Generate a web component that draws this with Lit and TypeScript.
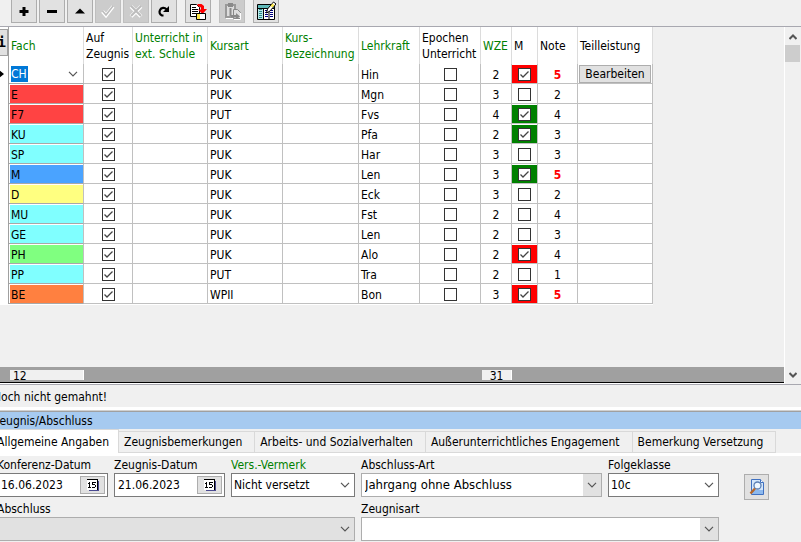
import { LitElement, html, css, svg, nothing } from "lit";
import { customElement } from "lit/decorators.js";
import { classMap } from "lit/directives/class-map.js";

type Mark = "" | "red" | "green";

interface Course {
  subject: string;
  tone: string;
  kind: string;
  teacher: string;
  hours: number;
  mark: Mark;
  grade: number;
}

const course = (
  subject: string,
  tone: string,
  kind: string,
  teacher: string,
  hours: number,
  mark: Mark,
  grade: number
): Course => ({ subject, tone, kind, teacher, hours, mark, grade });

const COURSES: Course[] = [
  course("CH", "plain", "PUK", "Hin", 2, "red", 5),
  course("E", "crimson", "PUK", "Mgn", 3, "", 2),
  course("F7", "crimson", "PUT", "Fvs", 4, "green", 4),
  course("KU", "cyan", "PUK", "Pfa", 2, "green", 3),
  course("SP", "cyan", "PUK", "Har", 3, "", 3),
  course("M", "blue", "PUK", "Len", 3, "green", 5),
  course("D", "yellow", "PUK", "Eck", 3, "", 2),
  course("MU", "cyan", "PUK", "Fst", 2, "", 4),
  course("GE", "cyan", "PUK", "Len", 2, "", 3),
  course("PH", "lime", "PUK", "Alo", 2, "red", 4),
  course("PP", "cyan", "PUT", "Tra", 2, "", 1),
  course("BE", "orange", "WPII", "Bon", 3, "red", 5),
];

const chevron = html`<svg class="chevron" width="10" height="6" viewBox="0 0 10 6">
  <path d="M1 .8 5 4.8 9 .8" fill="none" stroke="#555" stroke-width="1.2" />
</svg>`;

const glyph = (body: unknown, size = 20) =>
  html`<svg width=${size} height=${size} viewBox="0 0 ${size} ${size}">${body}</svg>`;

const ICONS = {
  plus: svg`<path d="M8.500 6h3v3h3v3h-3v3h-3v-3h-3V9h3z" fill="#000"/>`,
  minus: svg`<path d="M5 9h10v3H5z" fill="#000"/>`,
  up: svg`<path d="M10 7.500l5 5H5z" fill="#000"/>`,
  check: svg`<path d="M4.500 10.500l3.500 4 7-9" fill="none" stroke="#fff" stroke-width="3.600"/><path d="M4.500 10l3.500 4 7-9" fill="none" stroke="#bcbcbc" stroke-width="1.600"/>`,
  cross: svg`<path d="M5 5.500l10 10M15 5.500l-10 10" stroke="#fff" stroke-width="3.800"/><path d="M5 5l10 10M15 5L5 15" stroke="#bcbcbc" stroke-width="2"/>`,
  redo: svg`<path d="M9.500 14.500H8C5.500 13.500 5 11 6 9c1.200-2.600 4.500-2.800 6.500-.8" fill="none" stroke="#000" stroke-width="2.200"/><path d="M15 5v6H9z" fill="#000"/>`,
  copy: svg`<path d="M2.500 3.500h6l3 3v9h-9z" fill="#fff" stroke="#000"/><path d="M4 6.500h4M4 8.500h6M4 10.500h6M4 12.500h5" stroke="#000"/><path d="M9.500 3h4l2.500 2v3h3l-4.500 5L10 8.500h3V6.500L9.500 5z" fill="#f00"/><path d="M8.500 12.500h9v6h-9z" fill="#ffe94a" stroke="#000"/><path d="M12 13h5v5h-5z" fill="#fff"/>`,
  paste: svg`<path d="M3 3h11v14H3z" fill="#999"/><path d="M5 5h7v10H5z" fill="#ddd"/><path d="M6 2h5v4H6zM7.500 7h2v8h-2z" fill="#8a8a8a"/><path d="M11.500 8.500h4l3 3v6h-7z" fill="#ddd" stroke="#888"/><path d="M9 14h5v-2l4 3.500-4 3v-2H9z" fill="#888"/><path d="M4 17.500h7M18.500 12v6.500H12" stroke="#fff" fill="none"/>`,
  edit: svg`<path d="M1.500 3.500h17v15h-17z" fill="#fff" stroke="#000"/><path d="M2 4h16v3H2z" fill="#5fb8b8"/><path d="M2 7h5v11H2z" fill="#b8e8e8"/><path d="M3 8.500h3M3 10.500h3M3 12.500h3M3 14.500h3M3 16.500h3" stroke="#2a8a8a"/><path d="M9 9.500h3M9 11.500h3M9 13.500h3M9 15.500h3M14 9.500h3M14 11.500h3M14 13.500h3M14 15.500h3" stroke="#000080" stroke-width="1.200"/><path d="M7.500 7v11M13 7v11M2 7.500h16" stroke="#000"/><path d="M17.500 1l2.500 2-6 7-3.500 2 1-4z" fill="#fff" stroke="#000"/><path d="M16.500 2.500l2 1.500-2 2.500-2-1.500z" fill="#ffe94a"/>`,
};

const calendar = html`<svg width="12" height="12" viewBox="0 0 12 12" shape-rendering="crispEdges">
  <path d="M2 2h10v10H2z" fill="#4a4a90" />
  <path d="M0 1h10v10H0z" fill="#fff" />
  <path d="M0 0h11v1H0zM10 1h1v10h-1z" fill="#000" />
  <path d="M2 3h1v5H2zM1 4h1v1H1zM1 8h3v1H1zM5 3h4v1H5zM5 4h1v2H5zM6 5h2v1H6zM8 6h1v2H8zM5 8h3v1H5z" fill="#000" />
</svg>`;

const preview = html`<svg width="16" height="18" viewBox="0 0 16 18">
  <path d="M2.500 1.500h9l3 3v12h-12z" fill="#d3e6fb" stroke="#3f70c0" />
  <path d="M3 12h11v4H3z" fill="#8db9ee" />
  <path d="M11.500 1.500v3h3" fill="#fff" stroke="#3f70c0" />
  <circle cx="8.500" cy="7.500" r="3.500" fill="#eef7ff" stroke="#5b7fb5" stroke-width="1.300" />
  <path d="M6 10.500l-4.500 5" stroke="#b5662a" stroke-width="2.400" />
</svg>`;

const base = css`
  * {
    box-sizing: border-box;
  }
  button,
  input,
  select {
    font: inherit;
    color: inherit;
    margin: 0;
    padding: 0;
    border-radius: 0;
    outline: none;
  }
  svg {
    display: block;
    flex: none;
  }
`;

@customElement("grade-grid")
export class GradeGrid extends LitElement {
  static styles = [
    base,
    css`
      :host {
        display: flex;
        border-top: 1px solid #a8a8b0;
        border-bottom: 1px solid #a8a8b0;
      }
      .area {
        flex: 1;
        min-width: 0;
        display: flex;
        flex-direction: column;
        border-right: 1px solid #fff;
        border-bottom: 1px solid #fff;
        overflow: hidden;
      }
      table {
        table-layout: fixed;
        width: 665px;
        border-spacing: 0;
        background: #fff;
        border-bottom: 1px solid #fff;
      }
      .c-ind { width: 21px; }
      .c-75 { width: 75px; }
      .c-auf { width: 49px; }
      .c-bez { width: 76px; }
      .c-61 { width: 61px; }
      .c-wze { width: 31px; }
      .c-m { width: 26px; }
      .c-note { width: 40px; }
      th {
        height: 37px;
        padding: 0 0 0 2px;
        font-weight: normal;
        text-align: left;
        line-height: 16px;
        border-right: 1px solid #dcdcdc;
        white-space: nowrap;
      }
      td {
        height: 20px;
        padding: 2px 0 0 2px;
        line-height: 16px;
        border-right: 1px solid #c0c0c0;
        border-bottom: 1px solid #c0c0c0;
        white-space: nowrap;
      }
      .green-text { color: #008000; }
      .ind {
        border-right: 1px solid #a0a0a0;
        border-bottom: 0;
        padding: 0;
      }
      .info {
        display: block;
        width: 20px;
        height: 27px;
        margin-bottom: 7px;
        padding-right: 1px;
        text-align: right;
        font: bold 14px/16px "DejaVu Sans Mono", monospace;
        background: #e1e1e1;
        border: 1px solid #a0a0a0;
      }
      .ind svg { margin-left: auto; margin-right: 4px; }
      .center { text-align: center; padding-left: 0; }
      .subject {
        padding: 1px 0 0 1px;
        border-bottom-color: #a8a8a8;
      }
      .tone { height: 18px; padding: 2px 1px 0; }
      .crimson { background: #ff4343; }
      .cyan { background: #80ffff; }
      .blue { background: #4aa3ff; }
      .yellow { background: #ffff80; }
      .lime { background: #80ff80; }
      .orange { background: #ff8040; }
      .combo {
        display: flex;
        align-items: center;
        justify-content: space-between;
        height: 18px;
        padding: 0 5px 0 1px;
      }
      .combo input {
        width: 17px;
        height: 16px;
        border: 0;
        color: #fff;
        background: #0078d7;
      }
      .combo button { border: 0; background: none; }
      .box {
        appearance: none;
        display: block;
        width: 13px;
        height: 13px;
        margin: 0 auto;
        background: #fff;
        border: 1px solid #333;
      }
      .box:checked {
        background: #fff
          url("data:image/svg+xml,%3Csvg xmlns='http://www.w3.org/2000/svg' viewBox='0 0 11 11'%3E%3Cpath d='M1.500 5.500l2.500 2.500L9.500 2.500' fill='none' stroke='%23444' stroke-width='1.300'/%3E%3C/svg%3E");
      }
      .mark, .flush { padding-top: 1px; }
      .mark div {
        height: 18px;
        padding-top: 3px;
      }
      .red { background: #ff0000; }
      .green { background: #008000; }
      .fail { color: #ff0000; font-weight: bold; }
      .edit {
        display: block;
        width: 72px;
        height: 18px;
        margin-left: -1px;
        line-height: 16px;
        background: #e1e1e1;
        border: 1px solid #adadad;
      }
      .gap {
        flex: 1;
        min-height: 62px;
      }
      .totals {
        display: grid;
        grid-template-columns: 22px 74px 398px 30px;
        height: 16px;
        padding-top: 3px;
        background: #a0a0a0;
        border-bottom: 1px solid #000;
      }
      .sum {
        height: 10px;
        line-height: 12px;
        background: #f0f0f0;
        border-right: 1px solid #fff;
        text-align: center;
      }
      .sum.count { grid-column: 2; text-align: left; padding-left: 3px; }
      .sum.hours { grid-column: 4; }
      .scroll {
        width: 16px;
        display: flex;
        flex-direction: column;
        align-items: center;
        padding: 7px 0 6px;
      }
      .thumb {
        align-self: stretch;
        height: 17px;
        margin: 5px 1px auto 0;
        background: #cdcdcd;
      }
    `,
  ];

  private subjectCell(c: Course) {
    return c.tone === "plain"
      ? html`<div class="combo">
          <input aria-label="Fach" .value=${c.subject} />
          <button aria-label="Fach wählen">${chevron}</button>
        </div>`
      : html`<div class="tone ${c.tone}">${c.subject}</div>`;
  }

  private row = (c: Course, i: number) => html`<tr>
    <td class="ind">
      ${i === 0
        ? html`<svg width="8" height="8" viewBox="0 0 8 8"><path d="M0 2h3V0l5 4-5 4V6H0z" /></svg>`
        : nothing}
    </td>
    <td class="subject">${this.subjectCell(c)}</td>
    <td class="center"><input class="box" type="checkbox" aria-label="Auf Zeugnis ${c.subject}" checked /></td>
    <td></td>
    <td>${c.kind}</td>
    <td></td>
    <td>${c.teacher}</td>
    <td class="center"><input class="box" type="checkbox" aria-label="Epochenunterricht ${c.subject}" /></td>
    <td class="center">${c.hours}</td>
    <td class="center mark">
      <div class=${c.mark}>
        <input class="box" type="checkbox" aria-label="M ${c.subject}" ?checked=${c.mark !== ""} />
      </div>
    </td>
    <td class=${classMap({ center: true, fail: c.grade === 5 })}>${c.grade}</td>
    <td class="flush">${i === 0 ? html`<button class="edit">Bearbeiten</button>` : nothing}</td>
  </tr>`;

  render() {
    return html`
      <div class="area">
        <table>
          <colgroup>
            <col class="c-ind" /><col class="c-75" /><col class="c-auf" /><col class="c-75" />
            <col class="c-75" /><col class="c-bez" /><col class="c-61" /><col class="c-61" />
            <col class="c-wze" /><col class="c-m" /><col class="c-note" /><col class="c-75" />
          </colgroup>
          <thead>
            <tr>
              <th class="ind"><button class="info">i</button></th>
              <th class="green-text">Fach</th>
              <th>Auf<br />Zeugnis</th>
              <th class="green-text">Unterricht in<br />ext. Schule</th>
              <th class="green-text">Kursart</th>
              <th class="green-text">Kurs-<br />Bezeichnung</th>
              <th class="green-text">Lehrkraft</th>
              <th>Epochen<br />Unterricht</th>
              <th class="green-text">WZE</th>
              <th>M</th>
              <th>Note</th>
              <th>Teilleistung</th>
            </tr>
          </thead>
          <tbody>${COURSES.map(this.row)}</tbody>
        </table>
        <div class="gap"></div>
        <div class="totals">
          <div class="sum count">${COURSES.length}</div>
          <div class="sum hours">31</div>
        </div>
      </div>
      <div class="scroll">
        <svg width="8" height="6" viewBox="0 0 8 6"><path d="M.5 5 4 1.500 7.500 5" fill="none" stroke="#555" stroke-width="2" /></svg>
        <div class="thumb"></div>
        <svg width="8" height="6" viewBox="0 0 8 6"><path d="M.5 1 4 4.500 7.500 1" fill="none" stroke="#555" stroke-width="2" /></svg>
      </div>
    `;
  }
}

@customElement("report-form")
export class ReportForm extends LitElement {
  static styles = [
    base,
    css`
      :host { display: block; }
      .title {
        height: 18px;
        padding: 1px 4px 0;
        line-height: 16px;
        background: #a6caf0;
        border-top: 1px solid #a0a0a0;
      }
      .tabs {
        display: flex;
        align-items: flex-end;
        height: 24px;
      }
      .tab {
        height: 22px;
        padding: 0 12px 0 5px;
        background: #f0f0f0;
        border: 1px solid #d9d9d9;
        border-left: 0;
        white-space: nowrap;
        line-height: 18px;
      }
      .tab.active {
        height: 24px;
        padding: 0 9px;
        background: #fff;
        border-bottom: 0;
        line-height: 20px;
      }
      .strip { height: 3px; background: #fff; }
      .fields {
        display: grid;
        grid-template-columns: 111px 111px 124px 241px 111px 26px;
        column-gap: 6px;
        padding: 1px 0 0 9px;
      }
      .field {
        display: flex;
        flex-direction: column;
      }
      .field label { line-height: 16px; white-space: nowrap; }
      .green-text { color: #008000; }
      .wide { grid-column: span 3; }
      .two { grid-column: span 2; }
      .second { padding-top: 1px; }
      .control {
        position: relative;
        display: flex;
        align-items: center;
        height: 24px;
        background: #fff;
        border: 1px solid #7a7a7a;
      }
      .control input {
        flex: 1;
        min-width: 0;
        padding-left: 3px;
        border: 0;
        background: none;
      }
      .control select {
        appearance: none;
        width: 100%;
        height: 22px;
        padding-left: 2px;
        border: 0;
        background: none;
      }
      .arrow {
        position: absolute;
        right: 0;
        top: 0;
        bottom: 0;
        width: 18px;
        display: flex;
        align-items: center;
        justify-content: center;
        pointer-events: none;
      }
      .soft { border-color: #adadad; }
      .soft select { font-size: 13px; padding-left: 3px; }
      .soft .arrow { background: #e1e1e1; }
      .disabled { background: #e1e1e1; }
      .date {
        display: flex;
        align-items: center;
        justify-content: center;
        width: 25px;
        height: 18px;
        margin-right: 2px;
        background: #e1e1e1;
        border: 1px solid #adadad;
      }
      .preview {
        display: flex;
        align-items: center;
        justify-content: center;
        width: 25px;
        height: 26px;
        margin: 17px 0 0 19px;
        background: #e1e1e1;
        border: 1px solid #adadad;
      }
    `,
  ];

  private date(id: string, label: string, value: string) {
    return html`<div class="field">
      <label for=${id}>${label}</label>
      <div class="control">
        <input id=${id} .value=${value} />
        <button class="date" aria-label="Kalender öffnen">${calendar}</button>
      </div>
    </div>`;
  }

  private choice(id: string, label: string, value: string, outer = "", inner = "", tint = "") {
    return html`<div class="field ${outer}">
      <label for=${id} class=${tint}>${label}</label>
      <div class="control ${inner}">
        <select id=${id}><option>${value}</option></select>
        <span class="arrow">${chevron}</span>
      </div>
    </div>`;
  }

  render() {
    return html`
      <div class="title">Zeugnis/Abschluss</div>
      <div class="tabs" role="tablist">
        <button class="tab active" role="tab" aria-selected="true">Allgemeine Angaben</button>
        <button class="tab" role="tab">Zeugnisbemerkungen</button>
        <button class="tab" role="tab">Arbeits- und Sozialverhalten</button>
        <button class="tab" role="tab">Außerunterrichtliches Engagement</button>
        <button class="tab" role="tab">Bemerkung Versetzung</button>
      </div>
      <div class="strip"></div>
      <div class="fields">
        ${this.date("konferenz", "Konferenz-Datum", "16.06.2023")}
        ${this.date("zeugnis", "Zeugnis-Datum", "21.06.2023")}
        ${this.choice("vermerk", "Vers.-Vermerk", "Nicht versetzt", "", "", "green-text")}
        ${this.choice("art", "Abschluss-Art", "Jahrgang ohne Abschluss", "", "soft")}
        ${this.choice("folge", "Folgeklasse", "10c")}
        <button class="preview" aria-label="Vorschau">${preview}</button>
        ${this.choice("abschluss", "Abschluss", "", "wide second", "soft disabled")}
        ${this.choice("zeugnisart", "Zeugnisart", "", "two second", "soft")}
      </div>
    `;
  }
}

@customElement("app-root")
export class AppRoot extends LitElement {
  static styles = [
    base,
    css`
      :host {
        display: block;
        min-height: 100vh;
        overflow: hidden;
        background: #f0f0f0;
        color: #000;
        font: 12px/16px "DejaVu Sans Condensed", "DejaVu Sans", sans-serif;
      }
      .page { margin-left: -12px; }
      .toolbar {
        display: flex;
        gap: 2px;
        height: 26px;
        padding-left: 23px;
      }
      .tool {
        display: flex;
        align-items: center;
        justify-content: center;
        width: 26px;
        height: 23px;
        background: #e1e1e1;
        border: 1px solid #adadad;
        border-top: 0;
      }
      .tool:disabled { background: #ccc; border-color: #bfbfbf; }
      .apart { margin-left: 6px; }
      .notice {
        height: 25px;
        padding: 4px 0 0 5px;
        border-bottom: 3px solid #fff;
      }
      .rule { height: 1px; background: #d0d0d0; }
    `,
  ];

  private tool(icon: unknown, label: string, off = false, apart = false) {
    return html`<button class=${classMap({ tool: true, apart })} aria-label=${label} ?disabled=${off}>
      ${glyph(icon)}
    </button>`;
  }

  render() {
    return html`<div class="page">
      <div class="toolbar">
        ${this.tool(ICONS.plus, "Hinzufügen")} ${this.tool(ICONS.minus, "Entfernen")}
        ${this.tool(ICONS.up, "Bearbeiten")} ${this.tool(ICONS.check, "Speichern", true)}
        ${this.tool(ICONS.cross, "Verwerfen", true)} ${this.tool(ICONS.redo, "Aktualisieren")}
        ${this.tool(ICONS.copy, "Kopieren", false, true)} ${this.tool(ICONS.paste, "Einfügen", true, true)}
        ${this.tool(ICONS.edit, "Tabelle bearbeiten", false, true)}
      </div>
      <grade-grid></grade-grid>
      <div class="notice">Noch nicht gemahnt!</div>
      <div class="rule"></div>
      <report-form></report-form>
    </div>`;
  }
}
